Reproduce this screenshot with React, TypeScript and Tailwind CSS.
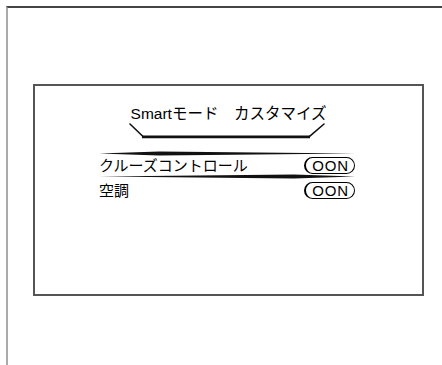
const font = { fontFamily: '"Liberation Sans", "Noto Sans CJK JP", sans-serif' }

const settings = [
  { label: 'クルーズコントロール', value: 'OON', selected: true },
  { label: '空調', value: 'OON', selected: false },
]

function Badge({ text }: { text: string }) {
  return (
    <div className="flex h-[17px] w-[51px] items-center justify-center rounded-full border-[1.5px] border-l-2 border-black pl-[1px] text-[15px] leading-none tracking-[0.8px] text-black">
      {text}
    </div>
  )
}

// tapered highlight stroke around the selected row
function Swoosh({ peak }: { peak: number }) {
  return (
    <svg width="256" height="5" viewBox="0 0 256 5" className="block">
      <polygon points={`0,2.5 ${peak},0.6 256,2.5 ${peak},4.4`} fill="#111" />
    </svg>
  )
}

export default function App() {
  return (
    <div className="h-[365px] w-[442px] overflow-hidden bg-white pl-[6px] pt-[6px]" style={font}>
      <div className="h-full border-l-2 border-t-2 border-l-[#aaa] border-t-[#444] pl-[25px] pt-[76px]">
        <div className="flex h-[212px] w-[391px] flex-col items-center border-2 border-[#555] bg-white">
          <p className="mt-[18px] text-[15.5px] leading-[20px] text-black">Smartモード　カスタマイズ</p>

          <svg width="200" height="16" viewBox="0 0 200 16" className="-mt-[1px] ml-[-2px] block">
            <path d="M2 1 L15 13.5" stroke="#111" strokeWidth="1.6" fill="none" strokeLinecap="round" />
            <path d="M14 13.8 L182 13.8" stroke="#111" strokeWidth="2.8" fill="none" />
            <path d="M181 13.8 L196 1" stroke="#111" strokeWidth="1.6" fill="none" strokeLinecap="round" />
          </svg>

          <div className="mt-[12px] flex w-full flex-col pl-[64px] pr-[67px]">
            {settings.map((s) =>
              s.selected ? (
                <div key={s.label} className="flex flex-col">
                  <Swoosh peak={60} />
                  <div className="flex h-[18px] items-center justify-between">
                    <span className="text-[15px] leading-none text-black">{s.label}</span>
                    <Badge text={s.value} />
                  </div>
                  <Swoosh peak={195} />
                </div>
              ) : (
                <div key={s.label} className="mt-[3px] flex h-[16px] items-center justify-between">
                  <span className="text-[15px] leading-none text-black">{s.label}</span>
                  <Badge text={s.value} />
                </div>
              ),
            )}
          </div>
        </div>
      </div>
    </div>
  )
}
